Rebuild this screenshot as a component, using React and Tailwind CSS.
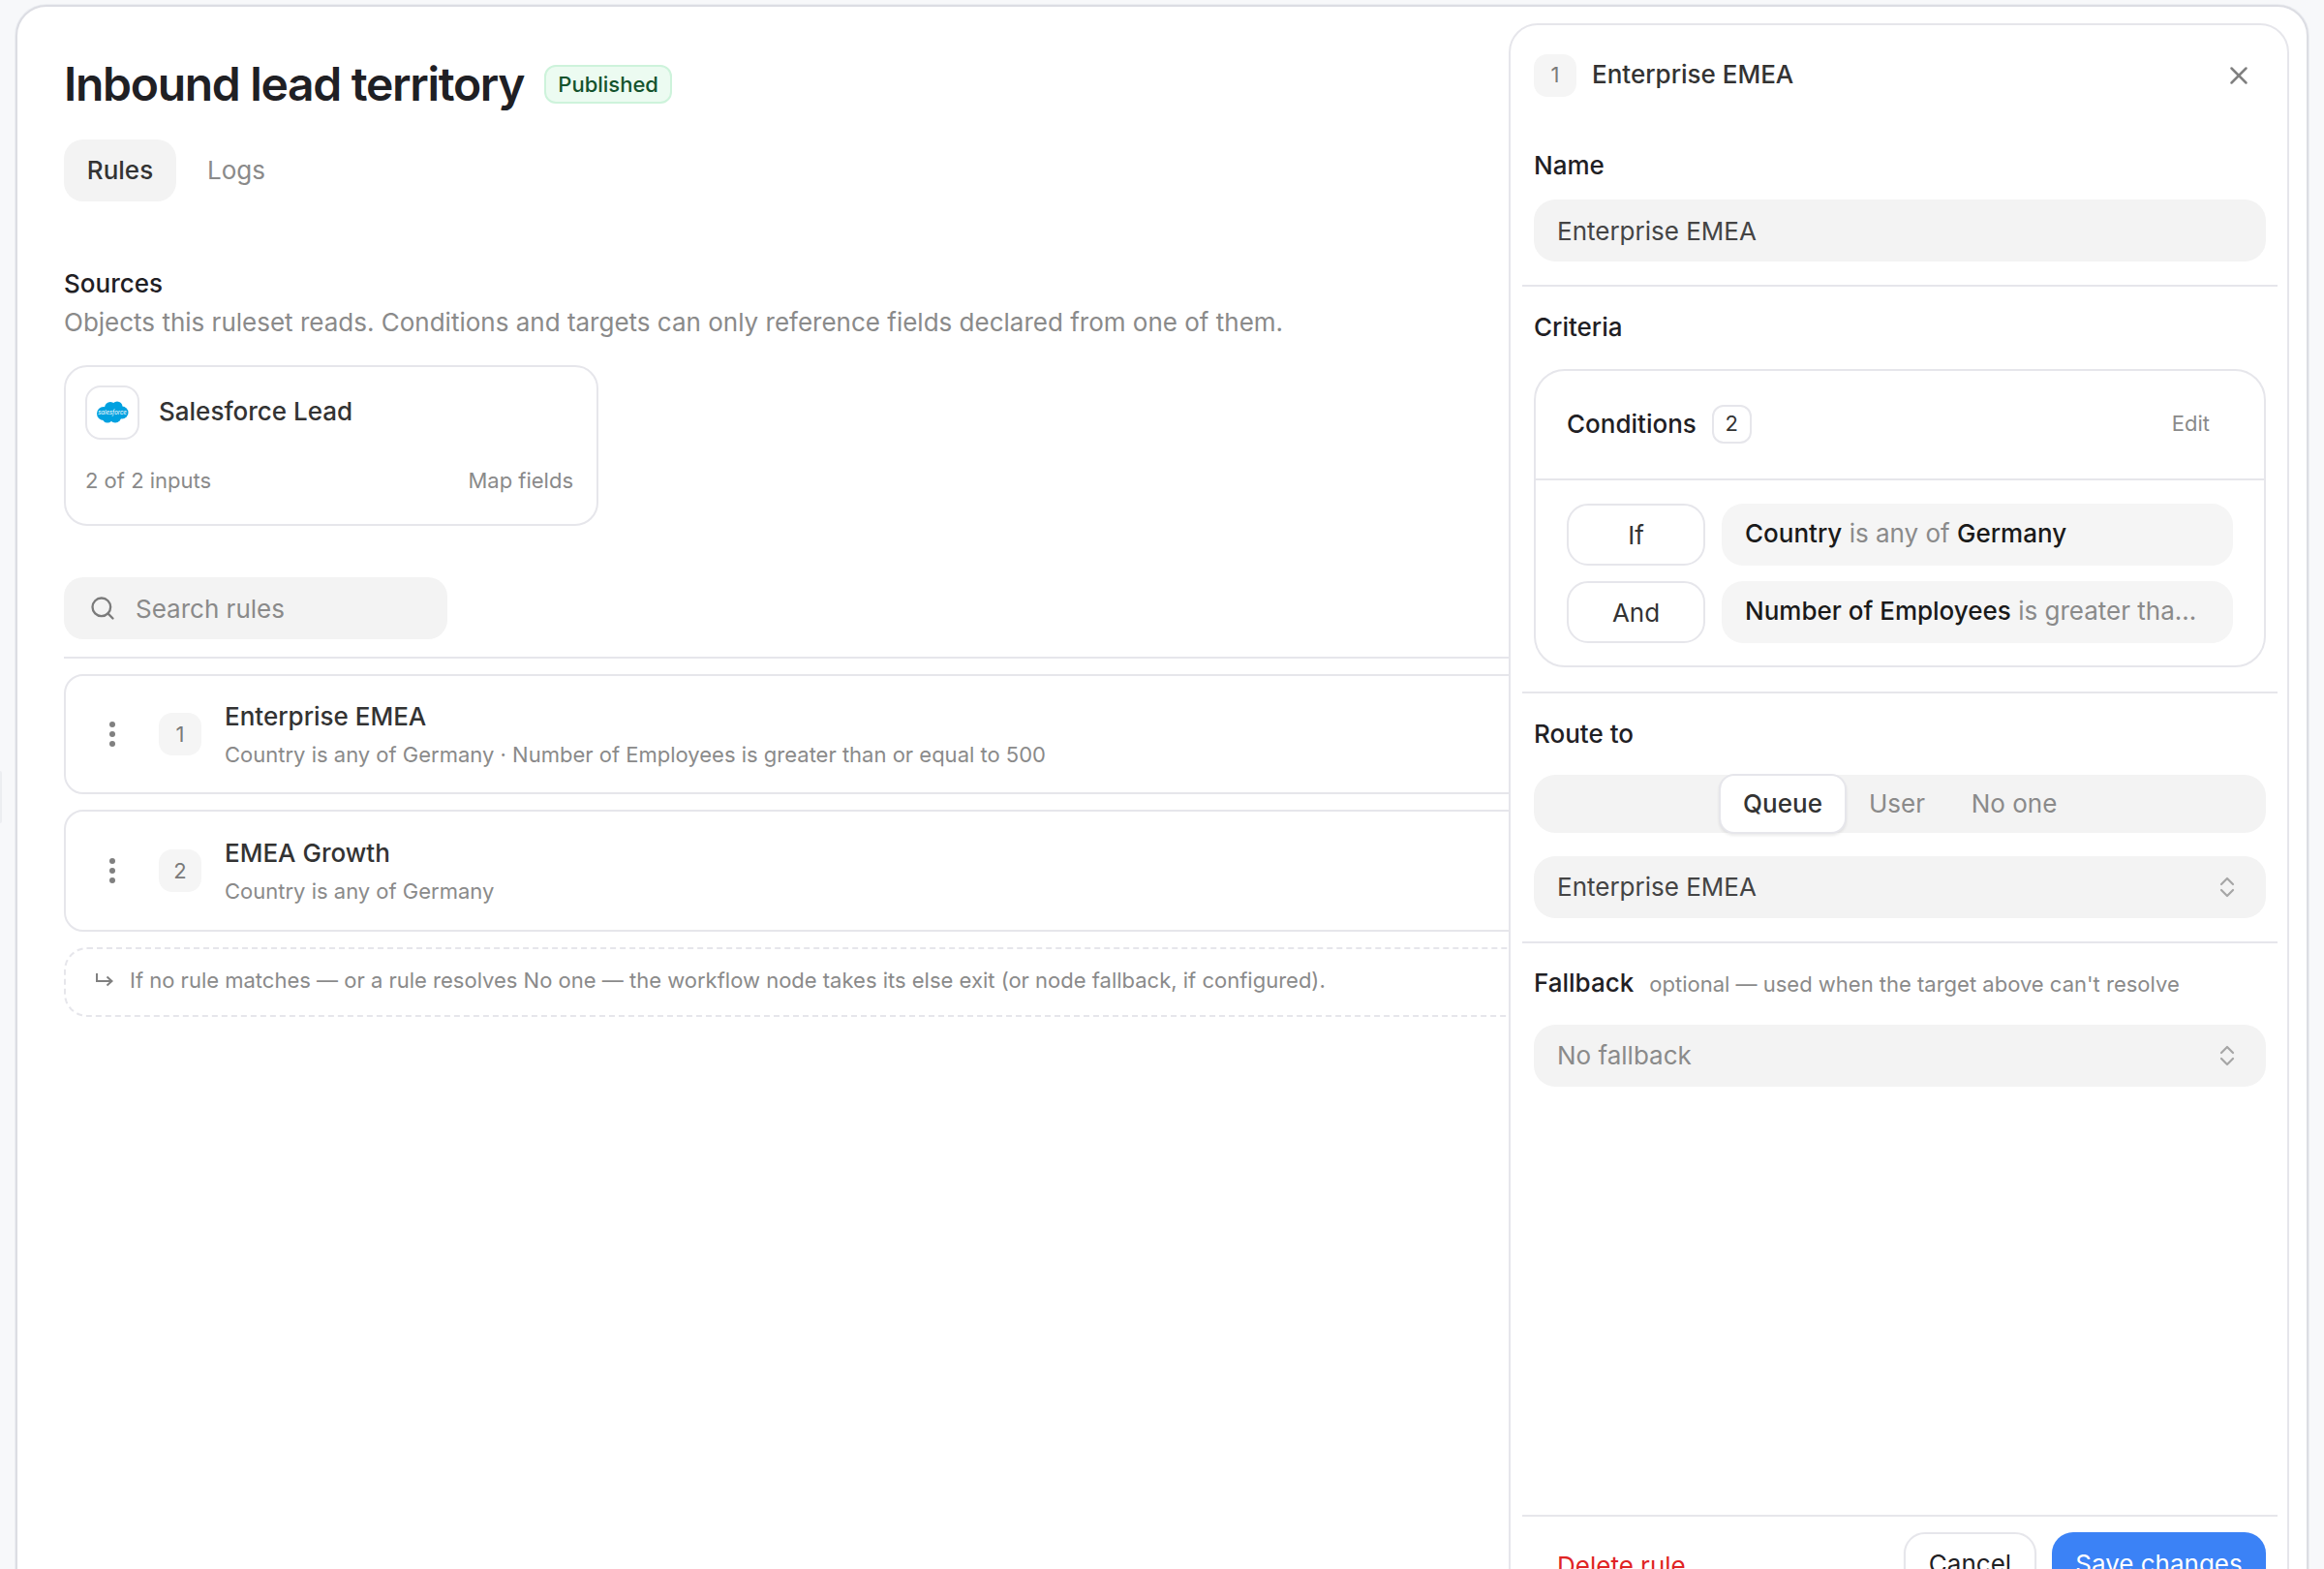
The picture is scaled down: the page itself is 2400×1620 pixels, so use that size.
import React from "react";
import { Search, X } from "lucide-react";

const font = { fontFamily: "Inter, 'Liberation Sans', sans-serif" };

function Dots() {
  return (
    <div className="flex w-[12px] flex-col items-center gap-[4px]">
      <span className="size-[6px] rounded-full bg-[#808080]" />
      <span className="size-[6px] rounded-full bg-[#808080]" />
      <span className="size-[6px] rounded-full bg-[#808080]" />
    </div>
  );
}

function NumBadge({ children, className = "" }) {
  return (
    <div className={`flex size-[44px] shrink-0 items-center justify-center rounded-[14px] bg-[#f5f5f5] text-[22px] text-[#7a7a7a] ${className}`}>
      {children}
    </div>
  );
}

function RuleCard({ n, title, sub, className }) {
  return (
    <div className={`flex items-center rounded-[20px] border-2 border-[#e6e6eb] pl-[42px] ${className}`}>
      <Dots />
      <div className="ml-[42px]">
        <NumBadge>{n}</NumBadge>
      </div>
      <div className="ml-[24px] flex flex-col gap-[8px] pt-[2px]">
        <div className="text-[26px] leading-[32px] font-medium text-[#333333]">{title}</div>
        <div className="text-[22px] leading-[30px] text-[#8a8a8a]">{sub}</div>
      </div>
    </div>
  );
}

function Chevrons() {
  return (
    <svg width="16" height="22" viewBox="0 0 16 22" fill="none" stroke="#a6a6a6" strokeWidth="2.2" strokeLinecap="round" strokeLinejoin="round" aria-hidden="true">
      <path d="M2 8l6-6 6 6M2 14l6 6 6-6" />
    </svg>
  );
}

function Select({ children, muted, className }) {
  return (
    <div className={`flex h-[64px] items-center justify-between rounded-[22px] bg-[#f3f3f3] pr-[32px] pl-[24px] text-[26px] ${muted ? "text-[#8a8a8a]" : "text-[#444444]"} ${className}`}>
      <span className="pb-[2px]">{children}</span>
      <Chevrons />
    </div>
  );
}

function Label({ children, className }) {
  return <div className={`text-[26px] leading-[36px] font-medium text-[#1f2024] ${className}`}>{children}</div>;
}

function Rule({ className }) {
  return <div className={`mx-[-12px] h-[2px] bg-[#e6e6eb] ${className}`} />;
}

function Cond({ op, children }) {
  return (
    <div className="flex gap-[17px]">
      <div className="flex h-[64px] w-[143px] shrink-0 items-center justify-center rounded-[22px] border-2 border-[#e6e6eb] text-[26px] text-[#333333]">
        {op}
      </div>
      <div className="h-[64px] min-w-0 flex-1 truncate rounded-[22px] bg-[#f5f5f5] px-[24px] text-[26px] leading-[62px] text-[#8a8a8a]">
        {children}
      </div>
    </div>
  );
}

const Strong = ({ children }) => <span className="font-medium text-[#1a1a1a]">{children}</span>;

export default function App() {
  return (
    <div style={font} className="relative h-[1620px] w-full overflow-hidden bg-[#f7f8fa] px-[16px] pt-[5px]">
      <div className="absolute top-[796px] left-0 h-[54px] w-[2px] rounded-r-[2px] bg-[#eceef1]" />
      <div className="relative h-[1700px] rounded-[32px] border-2 border-[#dcdde3] bg-white pt-[60px] pr-[48px] pl-[48px] shadow-[0_0_0_1px_#eceef2]">
        <div className="flex h-[40px] items-center">
          <h1 className="text-[48px] leading-[40px] font-semibold tracking-[-1.3px] text-[#1f2024]">Inbound lead territory</h1>
          <span className="ml-[21px] flex h-[40px] items-center rounded-[12px] border-2 border-[#cdf3db] bg-[#ecfbf1] px-[12px] text-[22px] font-medium text-[#14532d]">
            Published
          </span>
        </div>

        <div className="mt-[37px] flex items-center">
          <div className="flex h-[64px] w-[116px] items-center justify-center rounded-[20px] bg-[#f3f3f3] pb-[2px] text-[26px] font-medium text-[#333333]">Rules</div>
          <div className="ml-[32px] pb-[2px] text-[26px] text-[#8a8a8a]">Logs</div>
        </div>

        <div className="mt-[67px] text-[26px] leading-[36px] font-medium text-[#1f2024]">Sources</div>
        <div className="mt-[2px] text-[26px] leading-[40px] text-[#8a8a8a]">
          Objects this ruleset reads. Conditions and targets can only reference fields declared from one of them.
        </div>

        <div className="mt-[24px] h-[166px] w-[552px] rounded-[24px] border-2 border-[#e6e6eb] px-[20px] pt-[19px]">
          <div className="flex items-center">
            <div className="flex size-[56px] items-center justify-center rounded-[16px] border-2 border-[#e6e6eb]">
              <svg width="34" height="24" viewBox="0 0 34 24" aria-hidden="true">
                <g fill="#00a1e0">
                  <circle cx="8" cy="13" r="7" />
                  <circle cx="15" cy="7" r="6" />
                  <circle cx="22" cy="6" r="5.5" />
                  <circle cx="27" cy="12" r="6.5" />
                  <circle cx="20" cy="16" r="6.5" />
                  <circle cx="12" cy="17" r="5.5" />
                </g>
                <text x="17" y="14" textAnchor="middle" fontSize="6" fill="#ffffff" fontStyle="italic">salesforce</text>
              </svg>
            </div>
            <div className="ml-[20px] pb-[3px] text-[26px] font-medium text-[#333333]">Salesforce Lead</div>
          </div>
          <div className="mt-[26px] flex items-center justify-between pr-[4px] text-[22px] leading-[32px] text-[#8a8a8a]">
            <span>2 of 2 inputs</span>
            <span>Map fields</span>
          </div>
        </div>

        <div className="mt-[53px] flex h-[64px] w-[396px] items-center rounded-[20px] bg-[#f3f3f3] pl-[26px]">
          <Search className="size-[28px] text-[#7a7a7a]" strokeWidth={2} />
          <span className="ml-[20px] text-[26px] text-[#8a8a8a]">Search rules</span>
        </div>

        <div className="mt-[18px] h-[2px] bg-[#e6e6eb]" />

        <RuleCard className="mt-[16px] h-[124px]" n="1" title="Enterprise EMEA" sub="Country is any of Germany · Number of Employees is greater than or equal to 500" />
        <RuleCard className="mt-[16px] h-[126px]" n="2" title="EMEA Growth" sub="Country is any of Germany" />

        <div className="mt-[16px] flex h-[72px] items-center rounded-[24px] border-2 border-dashed border-[#e6e6eb] pb-[3px] pl-[30px] text-[22px] text-[#8a8a8a]">
          <svg className="-mt-[2px]" width="20" height="16" viewBox="0 0 20 16" fill="none" stroke="#808080" strokeWidth="2" aria-hidden="true">
            <path d="M2 1v8h16M12.5 4.5l5 4.5-5 4.5" />
          </svg>
          <span className="ml-[16px]">If no rule matches — or a rule resolves No one — the workflow node takes its else exit (or node fallback, if configured).</span>
        </div>

        <aside className="absolute top-[17px] right-[18px] flex h-[1660px] w-[806px] flex-col rounded-[30px] border-2 border-[#e6e6eb] bg-white pr-[22px] pl-[24px]">
          <div className="mt-[30px] flex items-center">
            <NumBadge className="pb-[2px]">1</NumBadge>
            <span className="ml-[16px] pb-[3px] text-[26px] font-medium text-[#333333]">Enterprise EMEA</span>
            <X className="mr-[13px] ml-auto size-[30px] text-[#808080]" strokeWidth={2} />
          </div>

          <Label className="mt-[53px]">Name</Label>
          <div className="mt-[17px] flex h-[64px] items-center rounded-[22px] bg-[#f3f3f3] px-[24px] text-[26px] text-[#444444]">Enterprise EMEA</div>
          <Rule className="mt-[24px]" />

          <Label className="mt-[24px]">Criteria</Label>
          <div className="mt-[25px] h-[308px] rounded-[32px] border-2 border-[#e6e6eb]">
            <div className="flex h-[113px] items-center border-b-2 border-[#e6e6eb] pr-[56px] pb-[3px] pl-[32px]">
              <span className="text-[26px] font-medium text-[#1f2024]">Conditions</span>
              <span className="mt-[2px] ml-[16px] flex h-[40px] w-[41px] items-center justify-center rounded-[12px] border-2 border-[#e6e6eb] pb-[2px] text-[22px] text-[#333333]">2</span>
              <span className="ml-auto text-[22px] text-[#8a8a8a]">Edit</span>
            </div>
            <div className="flex flex-col gap-[16px] pt-[24px] pr-[32px] pl-[32px]">
              <Cond op="If"><Strong>Country</Strong> is any of <Strong>Germany</Strong></Cond>
              <Cond op="And"><Strong>Number of Employees</Strong> is greater than or equal to 500</Cond>
            </div>
          </div>
          <Rule className="mt-[25px]" />

          <Label className="mt-[24px]">Route to</Label>
          <div className="mt-[24px] flex h-[60px] items-center justify-center rounded-[22px] bg-[#f3f3f3] text-[26px] text-[#8a8a8a]">
            <div className="mx-[-1px] flex h-[62px] w-[132px] items-center justify-center rounded-[16px] border-2 border-[#e6e6eb] bg-white pb-[2px] font-medium text-[#333333] shadow-[0_2px_3px_rgba(0,0,0,0.08)]">Queue</div>
            <div className="w-[106px] pb-[2px] text-center">User</div>
            <div className="w-[136px] pb-[2px] text-center">No one</div>
          </div>
          <Select className="mt-[24px]">Enterprise EMEA</Select>
          <Rule className="mt-[24px]" />

          <div className="mt-[23px] flex items-baseline">
            <Label>Fallback</Label>
            <span className="ml-[16px] text-[22px] text-[#8a8a8a]">optional — used when the target above can't resolve</span>
          </div>
          <Select muted className="mt-[25px]">No fallback</Select>

          <div className="flex-1" />

          <Rule />
          <div className="flex h-[116px] items-start justify-between pt-[16px]">
            <span className="mt-[15px] ml-[24px] text-[26px] text-[#e02424]">Delete rule</span>
            <div className="flex items-center gap-[16px]">
              <div className="flex h-[64px] w-[137px] items-center justify-center rounded-[22px] border-2 border-[#e6e6eb] bg-white text-[26px] text-[#1f2024] shadow-[0_1px_2px_rgba(0,0,0,0.06)]">Cancel</div>
              <div className="flex h-[64px] w-[221px] items-center justify-center rounded-[22px] bg-[#3b82f6] text-[26px] text-white">Save changes</div>
            </div>
          </div>
        </aside>
      </div>
    </div>
  );
}
